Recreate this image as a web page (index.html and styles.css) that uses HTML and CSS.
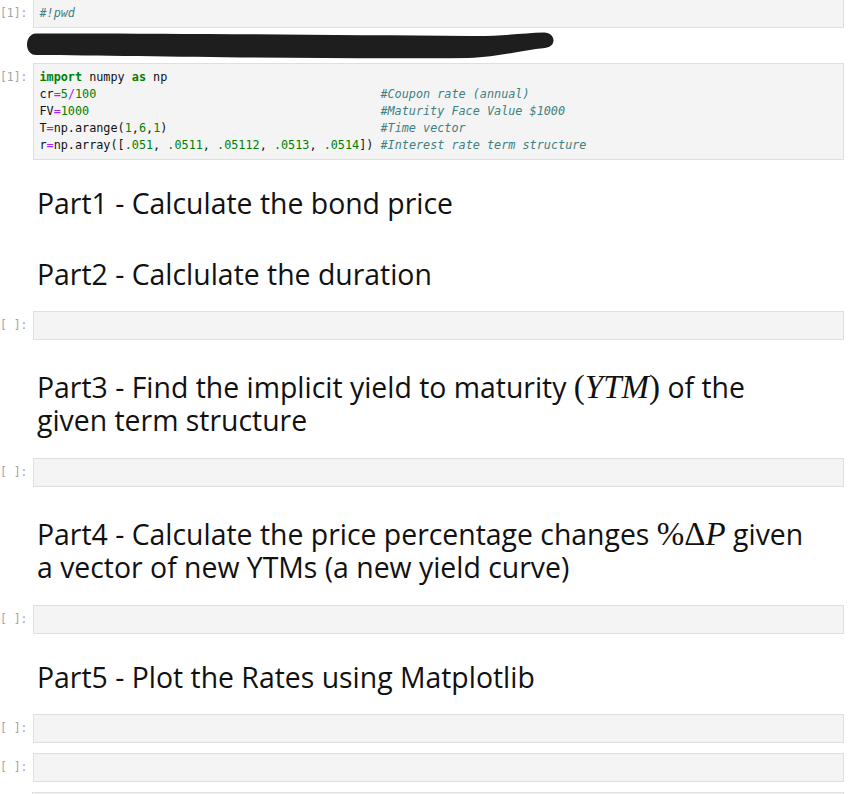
FILE: index.html
```html
<!DOCTYPE html>
<html lang="en">
<head>
<meta charset="utf-8">
<title>Bond notebook</title>
<link rel="stylesheet" href="styles.css">
</head>
<body>
<main class="nb">
  <section class="group">
    <div class="cell code">
      <div class="prompt">[1]:</div>
      <div class="editor"><pre><span class="c">#!pwd</span></pre></div>
    </div>
    <div class="output">
      <svg class="scribble" viewBox="0 28 856 25" width="856" height="25" preserveAspectRatio="none" aria-hidden="true">
        <path d="M36 33.5 C 150 33, 320 35, 470 36 C 500 36.5, 522 33, 544 32.5 C 556 32.5, 557 47, 545 48 C 522 50, 500 57, 468 58 C 330 59.5, 150 56, 36 55 C 24 55, 24 34, 36 33.5 Z" fill="#1e1e1e"/>
      </svg>
    </div>
  </section>

  <div class="cell code">
    <div class="prompt">[1]:</div>
    <div class="editor"><pre><span class="k">import</span> numpy <span class="k">as</span> np
cr<span class="o">=</span><span class="n">5</span><span class="o">/</span><span class="n">100</span>                                        <span class="c">#Coupon rate (annual)</span>
FV<span class="o">=</span><span class="n">1000</span>                                         <span class="c">#Maturity Face Value $1000</span>
T<span class="o">=</span>np.arange(<span class="n">1</span>,<span class="n">6</span>,<span class="n">1</span>)                              <span class="c">#Time vector</span>
r<span class="o">=</span>np.array([<span class="n">.051</span>, <span class="n">.0511</span>, <span class="n">.05112</span>, <span class="n">.0513</span>, <span class="n">.0514</span>]) <span class="c">#Interest rate term structure</span></pre></div>
  </div>

  <div class="cell md"><h2>Part1 - Calculate the bond price</h2></div>
  <div class="cell md"><h2>Part2 - Calclulate the duration</h2></div>

  <div class="cell code">
    <div class="prompt">[ ]:</div>
    <div class="editor"><pre></pre></div>
  </div>

  <div class="cell md tall"><h2>Part3 - Find the implicit yield to maturity <span class="math">(<i>YTM</i>)</span> of the given term structure</h2></div>

  <div class="cell code">
    <div class="prompt">[ ]:</div>
    <div class="editor"><pre></pre></div>
  </div>

  <div class="cell md tall"><h2>Part4 - Calculate the price percentage changes <span class="math">%Δ<i>P</i></span> given a vector of new YTMs (a new yield curve)</h2></div>

  <div class="cell code">
    <div class="prompt">[ ]:</div>
    <div class="editor"><pre></pre></div>
  </div>

  <div class="cell md"><h2>Part5 - Plot the Rates using Matplotlib</h2></div>

  <div class="cell code">
    <div class="prompt">[ ]:</div>
    <div class="editor"><pre></pre></div>
  </div>
  <div class="cell code">
    <div class="prompt">[ ]:</div>
    <div class="editor"><pre></pre></div>
  </div>
  <div class="cell code">
    <div class="prompt"></div>
    <div class="editor"><pre></pre></div>
  </div>
</main>
</body>
</html>
```

FILE: styles.css
```css
html { overflow: hidden; }
body {
  margin: 0;
  background: #ffffff;
  color: #111;
  font-family: "Open Sans", "Noto Sans", sans-serif;
}
.nb {
  display: flex;
  flex-direction: column;
  gap: 10px;
  margin-top: -1px;
  margin-right: 12px;
}
.group { display: flex; flex-direction: column; }
.cell.code { display: flex; }
.prompt {
  flex: 0 0 32px;
  box-sizing: border-box;
  padding: 6px 6px 0 0;
  display: flex;
  justify-content: flex-end;
  font-family: "DejaVu Sans Mono", "Liberation Mono", monospace;
  font-size: 11.4px;
  line-height: 17px;
  color: #a3a3a3;
  white-space: nowrap;
}
.editor {
  flex: 1;
  min-width: 0;
  background: #f4f4f4;
  border: 1px solid #dfdfdf;
  padding: 5px;
}
.editor pre {
  margin: 0;
  min-height: 17px;
  font-family: "DejaVu Sans Mono", "Liberation Mono", monospace;
  font-size: 11.8px;
  line-height: 17px;
  color: #111;
  white-space: pre;
}
.k { color: #008000; font-weight: bold; }
.o { color: #aa22ff; }
.n { color: #008000; }
.c { color: #408080; font-style: italic; }
.output { height: 25px; }
.scribble { display: block; overflow: visible; }
.cell.md {
  padding: 17px 29px 11px 37px;
}
.cell.md + .cell.md { margin-top: 1px; }
.cell.md.tall { padding-top: 21px; padding-bottom: 11px; }
.md h2 {
  margin: 0;
  font-weight: 500;
  font-size: 28.4px;
  line-height: 32px;
  color: #111;
}
.md.tall h2 { line-height: 33px; }
.math {
  font-family: "Liberation Serif", "DejaVu Serif", serif;
  font-weight: 400;
  font-size: 33px;
  line-height: 0;
}
.math i { font-style: italic; }
```
